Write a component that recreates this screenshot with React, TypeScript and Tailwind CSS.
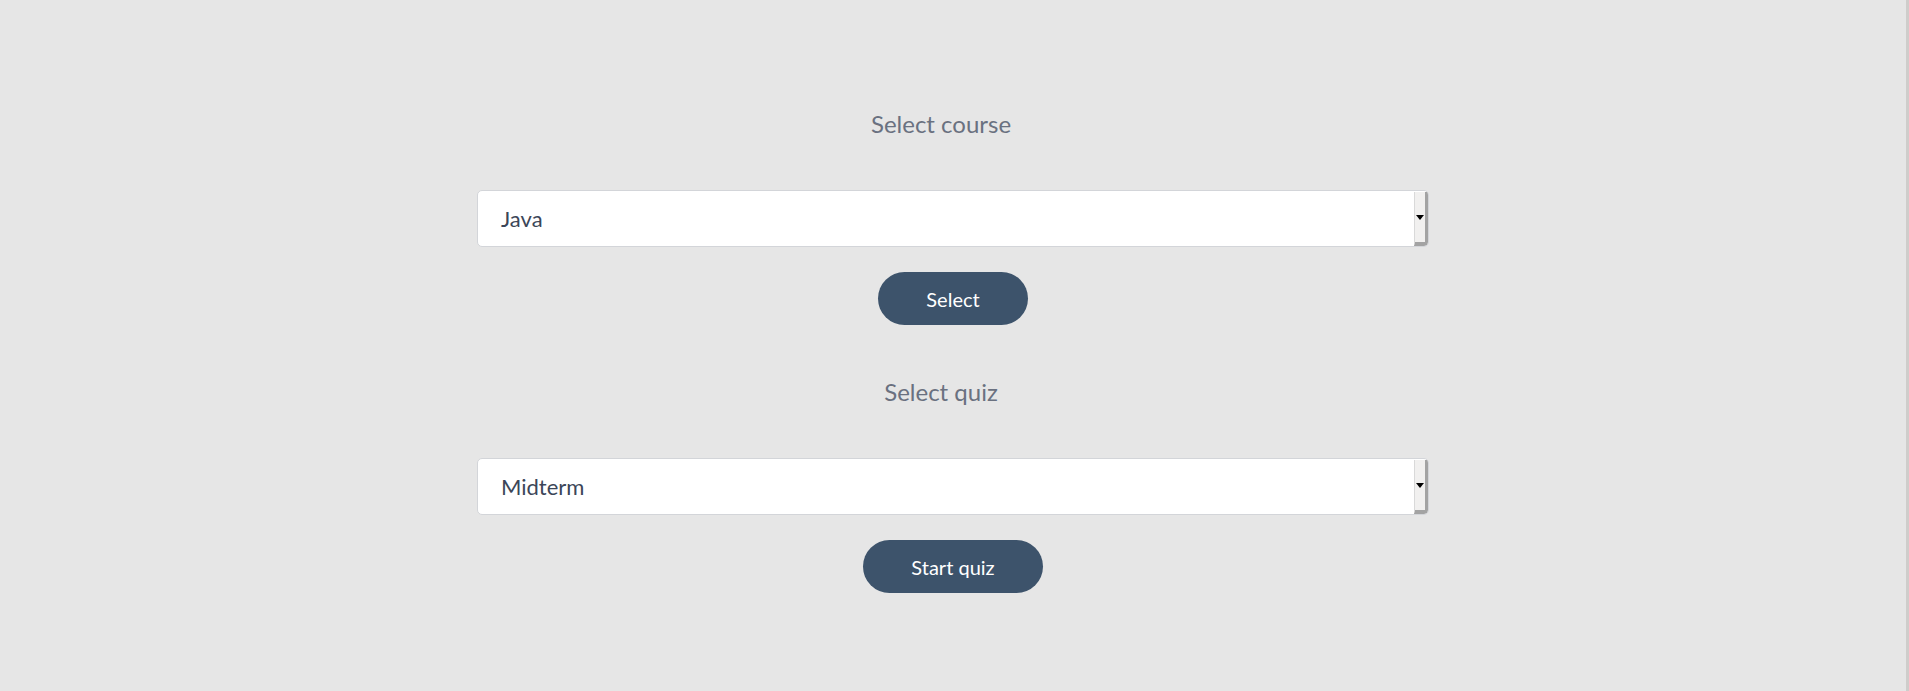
import { useState } from 'react'

const courses = ['Java', 'Python', 'C++']
const quizzes = ['Midterm', 'Final']

function FakeSelect({ value }: { value: string }) {
  return (
    <div className="w-[952px] h-[57px] flex bg-white border border-[#d3d5d9] rounded-[5px] overflow-hidden">
      <div className="flex-1 flex items-center pl-[23px] text-[22px] text-[#3b4658]">
        {value}
      </div>
      {/* old-style dropdown spinner */}
      <div className="w-[14px] mt-[1px] flex items-center justify-center bg-[#f1f0ef] border-l border-[#d9d9d9] border-r-[3px] border-b-[4px] border-r-[#a3a3a3] border-b-[#a3a3a3] rounded-br-[4px]">
        <div className="w-0 h-0 border-x-[4px] border-t-[5px] border-x-transparent border-t-black" />
      </div>
    </div>
  )
}

function Section({
  label,
  value,
  button,
  onClick,
}: {
  label: string
  value: string
  button: string
  onClick: () => void
}) {
  return (
    <div className="flex flex-col items-center">
      <div className="h-8 leading-8 pr-[24px] text-[24px] text-[#6a7180]">{label}</div>
      <div className="mt-[50px]">
        <FakeSelect value={value} />
      </div>
      <button
        onClick={onClick}
        className="mt-[25px] h-[53px] px-[48px] rounded-full bg-[#3d536b] text-white text-[20px] cursor-pointer"
      >
        {button}
      </button>
    </div>
  )
}

export default function App() {
  const [course] = useState(courses[0])
  const [quiz] = useState(quizzes[0])

  return (
    <div
      className="min-h-screen bg-[#e6e6e6] border-r-[3px] border-[#cfcdcb] pt-[108px] flex flex-col gap-[51px]"
      style={{ fontFamily: 'Lato, "Open Sans", sans-serif' }}
    >
      <Section label="Select course" value={course} button="Select" onClick={() => {}} />
      <Section label="Select quiz" value={quiz} button="Start quiz" onClick={() => {}} />
    </div>
  )
}
